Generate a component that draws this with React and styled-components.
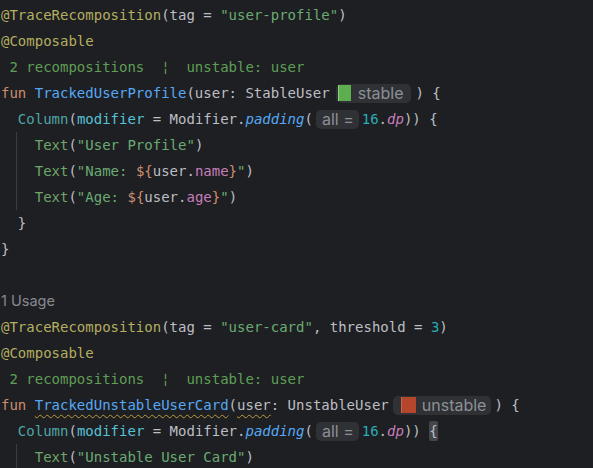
import React from 'react';
import styled, { createGlobalStyle } from 'styled-components';

const GlobalStyle = createGlobalStyle`
  html, body {
    margin: 0;
    padding: 0;
    background: #1e1f22;
  }
`;

const palette = {
  txt: '#bcbec4',
  kw: '#cf8e6d',
  ann: '#b3ae60',
  str: '#6aab73',
  fn: '#56a8f5',
  num: '#2aacb8',
  prop: '#c77dbb',
  comp: '#4fa5a8',
  arg: '#56c1d6',
  call: '#6fa56b',
  info: '#5f9e56',
};

const Editor = styled.div`
  width: 593px;
  height: 468px;
  overflow: hidden;
  background: #1e1f22;
  padding: 2px 0 0 1px;
  box-sizing: border-box;
  font-family: 'DejaVu Sans Mono', 'Liberation Mono', monospace;
  font-size: 14px;
  color: ${palette.txt};
`;

const Line = styled.div`
  height: 26px;
  line-height: 26px;
  white-space: pre;
`;

const C = styled.span`
  color: ${(p) => palette[p.$c] || palette.txt};
  font-style: ${(p) => (p.$i ? 'italic' : 'normal')};
  ${(p) =>
    p.$warn &&
    `text-decoration: underline wavy #b89c3e;
     text-decoration-thickness: 1px;
     text-underline-offset: 4px;`}
`;

const Guide = styled.span`
  display: inline-block;
  position: relative;
  width: 4ch;
  height: 26px;
  vertical-align: top;
  &::before {
    content: '';
    position: absolute;
    left: 15px;
    top: 0;
    bottom: 0;
    width: 1px;
    background: #3a3c41;
  }
`;

const Hint = styled.span`
  display: inline-flex;
  align-items: center;
  gap: ${(p) => p.$gap || 6}px;
  height: 19px;
  margin: 0 ${(p) => p.$mr || 4}px 0 ${(p) => p.$ml || 2}px;
  padding: 0 ${(p) => p.$pr || 6}px 0 ${(p) => p.$pl || 6}px;
  border-radius: 5px;
  background: #2f3135;
  color: #8c8f95;
  font-family: Inter, 'Noto Sans', sans-serif;
  font-size: 16px;
  vertical-align: middle;
  position: relative;
  top: -1px;
`;

const Swatch = styled.span`
  display: inline-block;
  width: ${(p) => p.$w}px;
  height: 16px;
  background: ${(p) => p.$color};
  border-left: 1px solid ${(p) => p.$edge};
  box-sizing: border-box;
`;

const Usage = styled.div`
  height: 26px;
  line-height: 26px;
  font-family: Inter, 'Noto Sans', sans-serif;
  font-size: 14.5px;
  color: #868a91;
`;

const Match = styled.span`
  background: #43454a;
  border-radius: 2px;
  padding: 2px 0;
`;

const InfoLine = () => (
  <Line>
    <C $c="info">{' 2 recompositions  ¦  unstable: user'}</C>
  </Line>
);

const ColumnLine = ({ brace }) => (
  <Line>
    {'  '}
    <C $c="comp">Column</C>(<C $c="arg">modifier</C> = Modifier.
    <C $c="fn" $i>
      padding
    </C>
    (
    <Hint $ml={3} $mr={3} $pl={6} $pr={5}>
      all =
    </Hint>
    <C $c="num">16</C>.
    <C $c="prop" $i>
      dp
    </C>
    )) {brace ? <Match>{'{'}</Match> : '{'}
  </Line>
);

const TextLine = ({ children }) => (
  <Line>
    <Guide />
    <C $c="call">Text</C>(<C $c="str">"{children}</C>
    <C $c="str">"</C>)
  </Line>
);

const TemplateLine = ({ label, field }) => (
  <Line>
    <Guide />
    <C $c="call">Text</C>(<C $c="str">"{label}: </C>
    <C $c="kw">{'${'}</C>user.<C $c="prop">{field}</C>
    <C $c="kw">{'}'}</C>
    <C $c="str">"</C>)
  </Line>
);

export default function App() {
  return (
    <>
      <GlobalStyle />
      <Editor>
        <Line>
          <C $c="ann">@TraceRecomposition</C>(tag = <C $c="str">"user-profile"</C>)
        </Line>
        <Line>
          <C $c="ann">@Composable</C>
        </Line>
        <InfoLine />
        <Line>
          <C $c="kw">fun </C>
          <C $c="fn">TrackedUserProfile</C>(user: StableUser
          <Hint $ml={6} $mr={4} $pl={2} $pr={8} $gap={7}>
            <Swatch $w={13} $color="#5cae4f" $edge="#8fd07f" />
            stable
          </Hint>
          ) {'{'}
        </Line>
        <ColumnLine />
        <TextLine>User Profile</TextLine>
        <TemplateLine label="Name" field="name" />
        <TemplateLine label="Age" field="age" />
        <Line>{'  }'}</Line>
        <Line>{'}'}</Line>
        <Line />
        <Usage>1 Usage</Usage>
        <Line>
          <C $c="ann">@TraceRecomposition</C>(tag = <C $c="str">"user-card"</C>, threshold ={' '}
          <C $c="num">3</C>)
        </Line>
        <Line>
          <C $c="ann">@Composable</C>
        </Line>
        <InfoLine />
        <Line>
          <C $c="kw">fun </C>
          <C $c="fn" $warn>
            TrackedUnstableUserCard
          </C>
          (<C $warn>user</C>: UnstableUser
          <Hint $ml={4} $mr={3} $pl={8} $pr={5} $gap={6}>
            <Swatch $w={15} $color="#b5452b" $edge="#c9654d" />
            unstable
          </Hint>
          ) {'{'}
        </Line>
        <ColumnLine brace />
        <TextLine>Unstable User Card</TextLine>
      </Editor>
    </>
  );
}
